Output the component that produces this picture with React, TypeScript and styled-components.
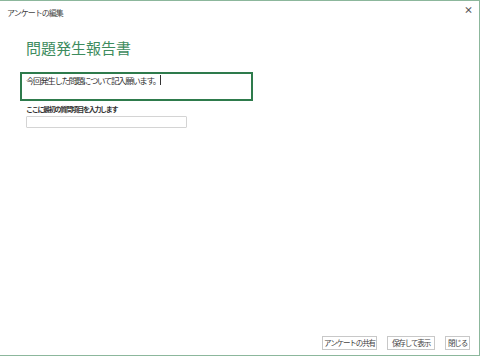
import React from "react";
import styled, { createGlobalStyle } from "styled-components";

const Global = createGlobalStyle`
  html, body { margin: 0; padding: 0; background: #ffffff; }
  body { font-family: "Noto Sans CJK JP", "Noto Sans", sans-serif; }
  * { box-sizing: border-box; }
`;

const Window = styled.div`
  width: 480px;
  height: 356px;
  border-top: 1px solid #8cb79c;
  border-right: 1px solid #8cb79c;
  border-bottom: 1px solid #8cb79c;
  display: flex;
  flex-direction: column;
  background: #fff;
`;

const TitleBar = styled.div`
  height: 24px;
  display: flex;
  align-items: center;
  justify-content: space-between;
  padding: 0 6px 2px 7px;
`;

const TitleText = styled.span`
  font-size: 8px;
  letter-spacing: -1px;
  color: #444;
`;

const Close = styled.span`
  font-size: 9px;
  font-weight: 700;
  color: #555;
  line-height: 1;
  margin-top: -6px;
`;

const Body = styled.div`
  flex: 1;
  display: flex;
  flex-direction: column;
  padding: 14px 0 0 20px;
`;

const Heading = styled.h1`
  margin: 0 0 0 6px;
  font-size: 15px;
  font-weight: 400;
  color: #3e8c5e;
  line-height: 17px;
`;

const Desc = styled.div`
  margin-top: 16px;
  width: 233px;
  height: 29px;
  border: 2px solid #2e7b4c;
  padding: 1px 0 0 4px;
  font-size: 8.5px;
  letter-spacing: -1.4px;
  color: #333;
  line-height: 11px;
  display: flex;
  align-items: flex-start;
`;

const Caret = styled.span`
  display: inline-block;
  width: 1px;
  height: 10px;
  background: #333;
  margin-left: 0;
`;

const Label = styled.div`
  margin: 3px 0 0 6px;
  font-size: 7px;
  font-weight: 700;
  letter-spacing: -1.3px;
  color: #333;
  line-height: 10px;
`;

const Field = styled.div`
  margin: 2px 0 0 6px;
  width: 161px;
  height: 12px;
  border: 1px solid #d4d4d4;
  border-radius: 1px;
`;

const Footer = styled.div`
  display: flex;
  justify-content: flex-end;
  gap: 10px;
  padding: 0 9px 5px 0;
`;

const Button = styled.button<{ $w: number }>`
  width: ${(p) => p.$w}px;
  height: 14px;
  padding: 0;
  border: 1px solid #c8c8c8;
  background: #fff;
  font-family: "Noto Sans CJK JP", sans-serif;
  font-size: 7.5px;
  letter-spacing: -1.1px;
  color: #444;
  line-height: 12px;
  white-space: nowrap;
  text-align: center;
`;

export default function App() {
  return (
    <>
      <Global />
      <Window>
        <TitleBar>
          <TitleText>アンケートの編集</TitleText>
          <Close>×</Close>
        </TitleBar>
        <Body>
          <Heading>問題発生報告書</Heading>
          <Desc>
            今回発生した問題について記入願います。
            <Caret />
          </Desc>
          <Label>ここに最初の質問項目を入力します</Label>
          <Field />
        </Body>
        <Footer>
          <Button $w={55}>アンケートの共有</Button>
          <Button $w={48}>保存して表示</Button>
          <Button $w={25}>閉じる</Button>
        </Footer>
      </Window>
    </>
  );
}
